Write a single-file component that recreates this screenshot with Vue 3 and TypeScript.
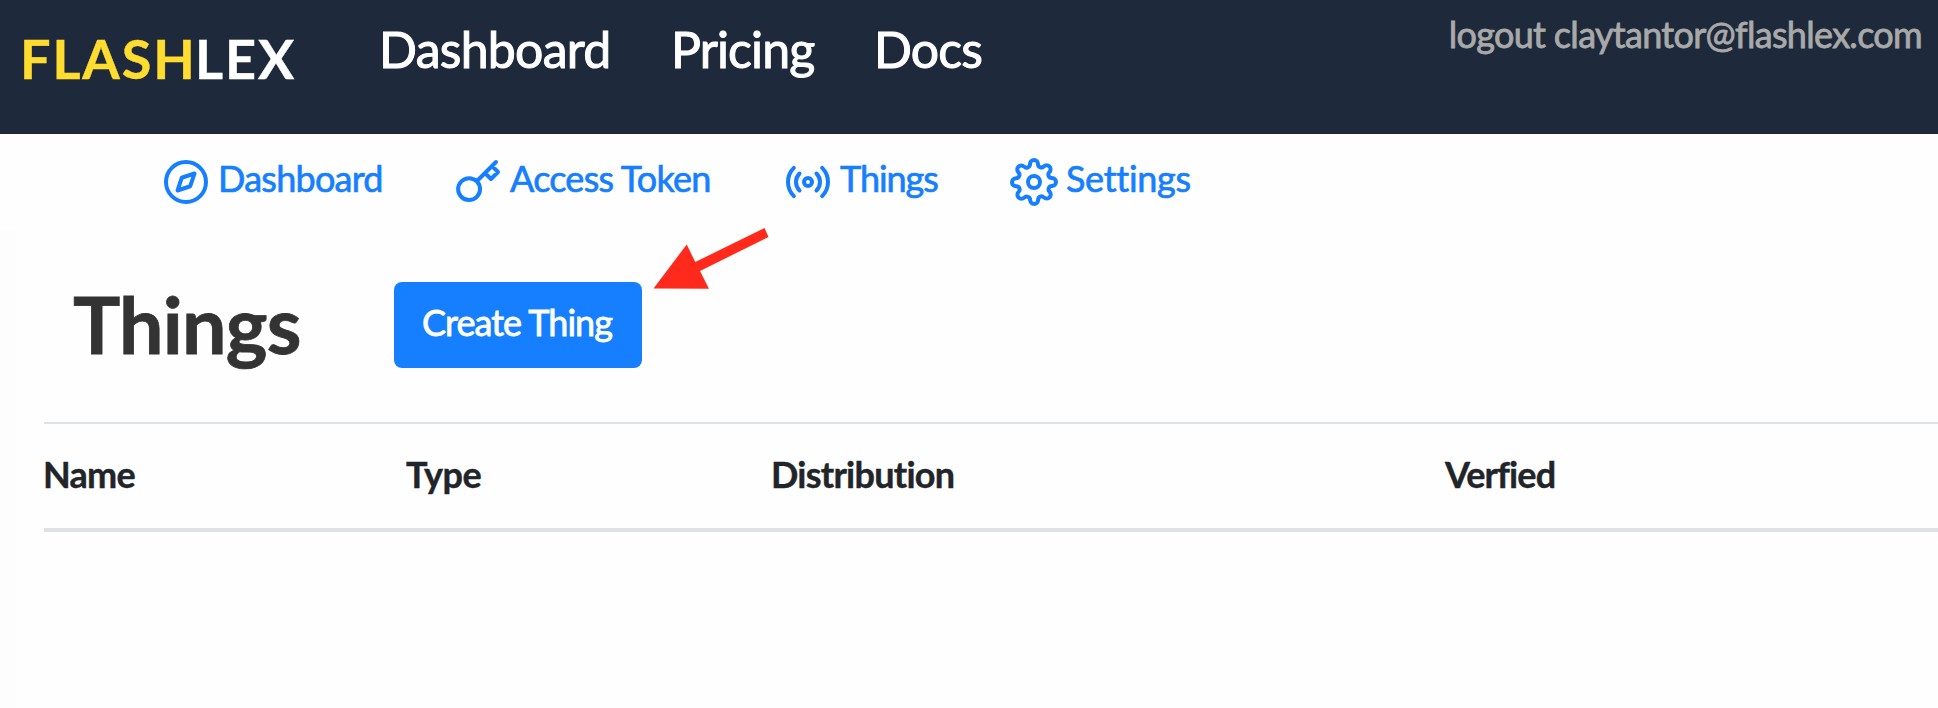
<script setup lang="ts">
interface NavLink {
  label: string
  tracking: string
}

interface SubLink extends NavLink {
  icon: 'compass' | 'key' | 'radio' | 'settings'
}

const mainLinks: NavLink[] = [
  { label: 'Dashboard', tracking: 'track-mid' },
  { label: 'Pricing', tracking: 'track-tight' },
  { label: 'Docs', tracking: 'track-tight' },
]

const subLinks: SubLink[] = [
  { label: 'Dashboard', icon: 'compass', tracking: 'track-mid' },
  { label: 'Access Token', icon: 'key', tracking: 'track-mid' },
  { label: 'Things', icon: 'radio', tracking: 'track-tightest' },
  { label: 'Settings', icon: 'settings', tracking: 'track-widest' },
]

const columns: NavLink[] = [
  { label: 'Name', tracking: 'track-mid' },
  { label: 'Type', tracking: 'track-wide' },
  { label: 'Distribution', tracking: 'track-mid' },
  { label: 'Verfied', tracking: 'track-tight' },
]
</script>

<template>
  <div class="page">
    <header class="topbar">
      <a class="logo"><span class="flash">FLASH</span><span class="lex">LEX</span></a>
      <nav class="main-nav">
        <a v-for="link in mainLinks" :key="link.label" :class="link.tracking">{{ link.label }}</a>
      </nav>
      <a class="logout">logout claytantor@flashlex.com</a>
    </header>

    <nav class="sub-nav">
      <a v-for="link in subLinks" :key="link.label" class="sub-link">
        <svg class="icon" viewBox="0 0 24 24" aria-hidden="true">
          <template v-if="link.icon === 'compass'">
            <circle cx="12" cy="12" r="10" />
            <polygon points="16.24 7.76 14.12 14.12 7.76 16.24 9.88 9.88 16.24 7.76" />
          </template>
          <path
            v-else-if="link.icon === 'key'"
            d="M21 2l-2 2m-7.61 7.61a5.5 5.5 0 1 1-7.778 7.778 5.5 5.5 0 0 1 7.777-7.777zm0 0L15.5 7.5m0 0l3 3L22 7l-3-3m-3.5 3.5L19 4"
          />
          <template v-else-if="link.icon === 'radio'">
            <circle cx="12" cy="12" r="2" />
            <path
              d="M16.24 7.76a6 6 0 0 1 0 8.49m-8.48-.01a6 6 0 0 1 0-8.49m11.31-2.82a10 10 0 0 1 0 14.14m-14.14 0a10 10 0 0 1 0-14.14"
            />
          </template>
          <template v-else>
            <circle cx="12" cy="12" r="3" />
            <path
              d="M19.4 15a1.65 1.65 0 0 0 .33 1.82l.06.06a2 2 0 0 1 0 2.83 2 2 0 0 1-2.83 0l-.06-.06a1.65 1.65 0 0 0-1.82-.33 1.65 1.65 0 0 0-1 1.51V21a2 2 0 0 1-2 2 2 2 0 0 1-2-2v-.09A1.65 1.65 0 0 0 9 19.4a1.65 1.65 0 0 0-1.82.33l-.06.06a2 2 0 0 1-2.83 0 2 2 0 0 1 0-2.83l.06-.06a1.65 1.65 0 0 0 .33-1.82 1.65 1.65 0 0 0-1.51-1H3a2 2 0 0 1-2-2 2 2 0 0 1 2-2h.09A1.65 1.65 0 0 0 4.6 9a1.65 1.65 0 0 0-.33-1.82l-.06-.06a2 2 0 0 1 0-2.83 2 2 0 0 1 2.83 0l.06.06a1.65 1.65 0 0 0 1.82.33H9a1.65 1.65 0 0 0 1-1.51V3a2 2 0 0 1 2-2 2 2 0 0 1 2 2v.09a1.65 1.65 0 0 0 1 1.51 1.65 1.65 0 0 0 1.82-.33l.06-.06a2 2 0 0 1 2.83 0 2 2 0 0 1 0 2.83l-.06.06a1.65 1.65 0 0 0-.33 1.82V9a1.65 1.65 0 0 0 1.51 1H21a2 2 0 0 1 2 2 2 2 0 0 1-2 2h-.09a1.65 1.65 0 0 0-1.51 1z"
            />
          </template>
        </svg>
        <span :class="link.tracking">{{ link.label }}</span>
      </a>
    </nav>

    <main class="content">
      <div class="heading">
        <h1>Things</h1>
        <button type="button" class="create">Create Thing</button>
      </div>
      <div class="table">
        <div class="table-head">
          <span v-for="col in columns" :key="col.label" :class="col.tracking">{{ col.label }}</span>
        </div>
      </div>
    </main>

    <svg class="pointer" viewBox="0 0 116 62" aria-hidden="true">
      <polygon points="0.5,60.5 33.7,16.5 42.3,34 111.5,0 115.5,9 47,43 56,60.8" />
    </svg>
  </div>
</template>

<style>
body {
  margin: 0;
  background: #fefefe;
}
</style>

<style scoped>
.page {
  position: relative;
  height: 708px;
  overflow: hidden;
  background: #fefefe;
  font-family: Lato, 'Liberation Sans', sans-serif;
  font-size: 36px;
  line-height: 44px;
  font-kerning: normal;
}

.topbar {
  display: flex;
  align-items: flex-start;
  box-sizing: border-box;
  height: 134px;
  padding-left: 20px;
  background: #1e2a3b;
  border-bottom: 1px solid #1a2438;
}

.logo {
  flex: none;
  width: 359px;
  padding-top: 26px;
  font-size: 54px;
  line-height: 65px;
  font-weight: 700;
  letter-spacing: 1.85px;
  white-space: nowrap;
  -webkit-text-stroke: 0.4px;
}

.flash {
  color: #ffdc2f;
}

.lex {
  margin-left: -1.5px;
  color: #fff;
}

.main-nav {
  display: grid;
  grid-template-columns: 292px 203px auto;
  padding-top: 19px;
  color: #fff;
  font-size: 50px;
  line-height: 60px;
  -webkit-text-stroke: 1px;
}

.logout {
  margin-left: auto;
  padding: 12px 16px 0 0;
  color: #a9a9a9;
  letter-spacing: -0.69px;
  white-space: nowrap;
  -webkit-text-stroke: 0.8px;
}

.sub-nav {
  display: grid;
  grid-template-columns: 292px 330px 226px auto;
  padding: 22px 0 0 162px;
  color: #167fff;
}

.sub-link {
  display: flex;
  gap: 8px;
  height: 50px;
  white-space: nowrap;
  -webkit-text-stroke: 0.7px;
}

.icon {
  flex: none;
  width: 48px;
  height: 48px;
  margin-top: 2px;
  fill: none;
  stroke: currentColor;
  stroke-width: 2;
  stroke-linecap: round;
  stroke-linejoin: round;
}

.content {
  box-sizing: border-box;
  height: 502px;
  padding-top: 4px;
  background: linear-gradient(#fdfdfd, #fdfdfd) 0 24px / 16px 100% no-repeat;
}

.heading {
  display: flex;
  align-items: flex-start;
  height: 212px;
  padding-left: 73px;
}

h1 {
  width: 321px;
  margin: 67px 0 0;
  color: #333;
  font-size: 79px;
  line-height: 94px;
  font-weight: 700;
  letter-spacing: -0.75px;
  -webkit-text-stroke: 0.8px;
}

.create {
  width: 248px;
  height: 86px;
  margin: 72px 0 0;
  padding: 0 0 6px 28px;
  border: 0;
  border-radius: 8px;
  background: #167fff;
  color: #fff;
  font: inherit;
  letter-spacing: -0.95px;
  text-align: left;
  white-space: nowrap;
  -webkit-text-stroke: 0.8px;
}

.table {
  margin-left: 44px;
  border-top: 2px solid #dee2e6;
  border-bottom: 4px solid #dee2e6;
}

.table-head {
  display: grid;
  grid-template-columns: 363px 365px 674px auto;
  height: 76px;
  margin-left: -1px;
  padding-top: 28px;
  color: #212529;
  font-weight: 700;
  -webkit-text-stroke: 0.4px;
}

.track-tightest {
  letter-spacing: -1.05px;
}

.track-tight {
  letter-spacing: -0.9px;
}

.track-mid {
  letter-spacing: -0.75px;
}

.track-wide {
  letter-spacing: -0.54px;
}

.track-widest {
  letter-spacing: -0.3px;
}

/* Callout arrow drawn over the page, aimed at the create button */
.pointer {
  position: absolute;
  left: 653px;
  top: 228px;
  width: 116px;
  height: 62px;
  fill: #ff2a1c;
}
</style>
